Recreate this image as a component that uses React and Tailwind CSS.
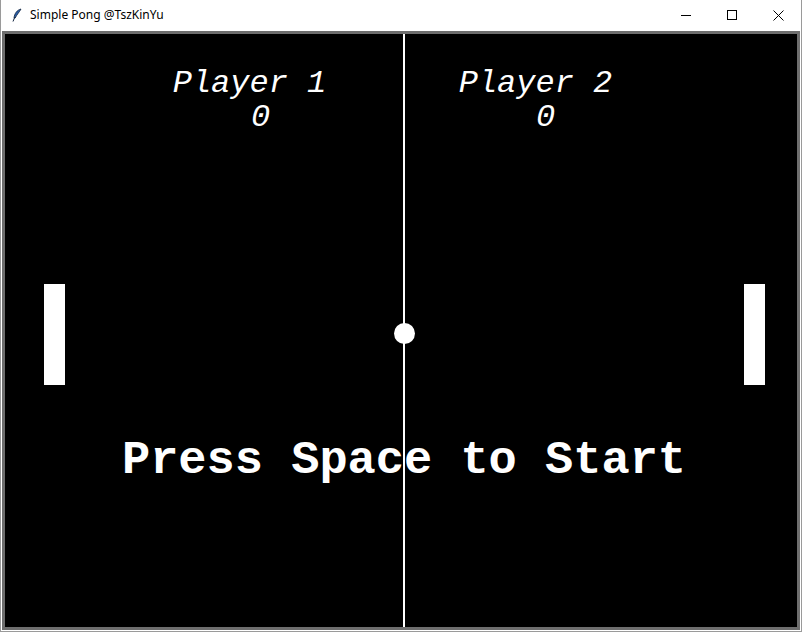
import React from 'react';

const mono = {
  fontFamily: '"Courier New", "Nimbus Mono PS", "Nimbus Mono L", "FreeMono", "Liberation Mono", monospace',
};

function Feather() {
  return (
    <svg width="10" height="14" viewBox="0 0 10 14" className="shrink-0">
      <path d="M9 1 C5 2 2.5 5.5 2 10 L3.2 10 C4.5 7 7.5 4 9 1 Z" fill="#2b5fa8" stroke="#10233f" strokeWidth="0.8" />
      <path d="M2.6 9.5 L1 13.5" stroke="#10233f" strokeWidth="1" />
    </svg>
  );
}

function TitleBar() {
  return (
    <div className="h-[30px] bg-white flex items-center shrink-0">
      <div className="pl-[11px] pr-[8px] flex items-center">
        <Feather />
      </div>
      <span className="text-[12px] text-black" style={{ fontFamily: '"Noto Sans", "Open Sans", sans-serif' }}>
        Simple Pong @TszKinYu
      </span>
      <div className="ml-auto flex h-full">
        <div className="w-[46px] h-full flex items-center justify-center">
          <div className="w-[10px] h-px bg-black" />
        </div>
        <div className="w-[46px] h-full flex items-center justify-center">
          <div className="w-[10px] h-[10px] border border-black" />
        </div>
        <div className="w-[46px] h-full flex items-center justify-center">
          <svg width="11" height="11" viewBox="0 0 11 11">
            <path d="M0.5 0.5 L10.5 10.5 M10.5 0.5 L0.5 10.5" stroke="#000" strokeWidth="1" />
          </svg>
        </div>
      </div>
    </div>
  );
}

function Score({ label, score, labelCenter, scoreCenter }) {
  return (
    <>
      <div
        className="absolute w-[300px] text-center text-white italic text-[32px] leading-[32px] whitespace-pre"
        style={{ ...mono, left: labelCenter - 150, top: 34 }}
      >
        {label}
      </div>
      <div
        className="absolute w-[100px] text-center text-white italic text-[32px] leading-[32px]"
        style={{ ...mono, left: scoreCenter - 50, top: 68 }}
      >
        {score}
      </div>
    </>
  );
}

function PongCanvas() {
  return (
    <div className="relative flex-1 bg-black border-[3px] border-[#6e6e6e] overflow-hidden">
      <Score label="Player 1" score="0" labelCenter={244.5} scoreCenter={255.5} />
      <Score label="Player 2" score="0" labelCenter={530.5} scoreCenter={540.5} />

      <div className="absolute left-[39px] top-[250px] w-[21px] h-[101px] bg-white" />
      <div className="absolute left-[739px] top-[250px] w-[21px] h-[101px] bg-white" />

      <div
        className="absolute left-0 right-0 top-[403px] text-center text-white font-bold text-[47px] leading-[47px] whitespace-pre"
        style={{ ...mono, paddingLeft: 6 }}
      >
        Press Space to Start
      </div>

      <div className="absolute left-[398px] top-0 bottom-0 w-[2px] bg-white" />
      <div className="absolute left-[389px] top-[289px] w-[21px] h-[21px] rounded-full bg-white" />
    </div>
  );
}

export default function App() {
  return (
    <div className="w-[802px] h-[632px] flex flex-col bg-white border-x border-b border-[#9a9a9a]">
      <TitleBar />
      <div className="flex-1 flex p-px">
        <PongCanvas />
      </div>
    </div>
  );
}
